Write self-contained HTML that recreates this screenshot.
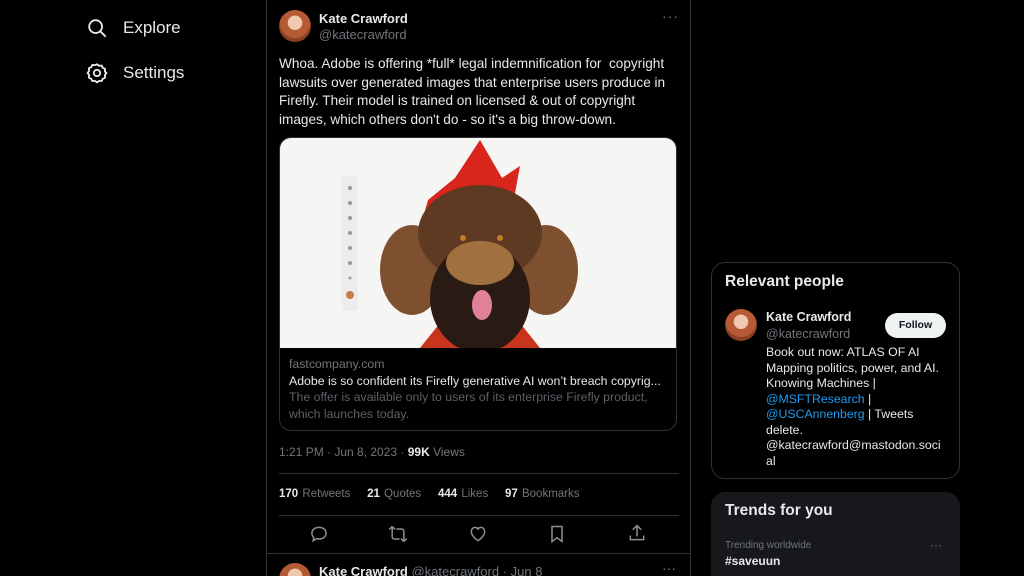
<!DOCTYPE html>
<html><head><meta charset="utf-8"><style>
*{margin:0;padding:0;box-sizing:border-box}
html,body{width:1024px;height:576px;overflow:hidden}
body{background:#000;position:relative;font-family:"Liberation Sans",sans-serif;color:#e7e9ea}
.abs{position:absolute}
.nav{font-size:17px;color:#e7e9ea}
.col{left:266px;top:0;width:425px;height:576px;border-left:1px solid #2f3336;border-right:1px solid #2f3336}
.av{border-radius:50%;background:radial-gradient(circle at 50% 40%,#f0c8b0 0 28%,#b55a35 30% 60%,#8a3e22 62%)}
.muted{color:#71767b}
b{font-weight:700}
.line{height:1px;background:#2f3336}
</style></head><body>
<svg class="abs" style="left:86px;top:17px" width="22" height="22" viewBox="0 0 24 24" fill="none" stroke="#e7e9ea" stroke-width="2"><circle cx="10.5" cy="10.5" r="7"/><path d="M15.5 15.5l6 6"/></svg>
<div class="abs nav" style="left:123px;top:18px">Explore</div>
<svg class="abs" style="left:86px;top:62px" width="22" height="22" viewBox="0 0 24 24" fill="none" stroke="#e7e9ea" stroke-width="2"><path d="M12 2.5l2.3 1.6 2.8-.2 1.2 2.5 2.5 1.2-.2 2.8L22.2 12l-1.6 2.3.2 2.8-2.5 1.2-1.2 2.5-2.8-.2L12 22.2l-2.3-1.6-2.8.2-1.2-2.5-2.5-1.2.2-2.8L1.8 12l1.6-2.3-.2-2.8 2.5-1.2 1.2-2.5 2.8.2z"/><circle cx="12" cy="12" r="3.5"/></svg>
<div class="abs nav" style="left:123px;top:63px">Settings</div>

<div class="abs col"></div>
<div class="abs av" style="left:279px;top:10px;width:32px;height:32px"></div>
<div class="abs" style="left:319px;top:11px;font-size:13px;font-weight:700">Kate Crawford</div>
<div class="abs muted" style="left:319px;top:27px;font-size:13px">@katecrawford</div>
<div class="abs muted" style="left:662px;top:8px;font-size:14px;letter-spacing:1px">···</div>
<div class="abs" style="left:279px;top:55px;width:405px;font-size:13.6px;line-height:18.5px">Whoa. Adobe is offering *full* legal indemnification for&nbsp; copyright lawsuits over generated images that enterprise users produce in Firefly. Their model is trained on licensed &amp; out of copyright images, which others don't do - so it's a big throw-down.</div>

<div class="abs" style="left:279px;top:137px;width:398px;height:294px;border:1px solid #2f3336;border-radius:12px;overflow:hidden">
<svg width="398" height="210" viewBox="0 0 398 210" style="display:block">
<rect width="398" height="210" fill="#f5f5f4"/>
<rect x="62" y="38" width="16" height="135" rx="2" fill="#ececec"/>
<g fill="#999"><circle cx="70" cy="50" r="2"/><circle cx="70" cy="65" r="2"/><circle cx="70" cy="80" r="2"/><circle cx="70" cy="95" r="2"/><circle cx="70" cy="110" r="2"/><circle cx="70" cy="125" r="2"/><circle cx="70" cy="140" r="1.5"/></g>
<circle cx="70" cy="157" r="4" fill="#c87a4a"/>
<path d="M143 80 L148 62 L175 40 L200 2 L222 40 L240 28 L235 55 L258 80 L250 90 L150 90 Z" fill="#d8261c"/>
<ellipse cx="132" cy="132" rx="32" ry="45" fill="#7e5030"/>
<ellipse cx="266" cy="132" rx="32" ry="45" fill="#7e5030"/>
<ellipse cx="200" cy="95" rx="62" ry="48" fill="#5e3a22"/>
<path d="M140 210 L160 185 L200 200 L240 185 L260 210 Z" fill="#c8341c"/>
<ellipse cx="200" cy="160" rx="50" ry="55" fill="#2a1a14"/>
<ellipse cx="200" cy="125" rx="34" ry="22" fill="#a0703f"/>
<ellipse cx="202" cy="167" rx="10" ry="15" fill="#e0809a"/>
<circle cx="183" cy="100" r="3" fill="#c08020"/><circle cx="220" cy="100" r="3" fill="#c08020"/>
</svg>
<div style="padding:8px 10px 0 9px;font-size:12.3px;line-height:16.5px">
<div class="muted">fastcompany.com</div>
<div style="white-space:nowrap">Adobe is so confident its Firefly generative AI won’t breach copyrig...</div>
<div style="color:#5b6066">The offer is available only to users of its enterprise Firefly product, which launches today.</div>
</div></div>

<div class="abs muted" style="left:279px;top:445px;font-size:12px">1:21 PM · Jun 8, 2023 · <b style="color:#e7e9ea">99K</b> Views</div>
<div class="abs line" style="left:279px;top:473px;width:400px"></div>
<div class="abs muted" style="left:279px;top:488px;font-size:11.5px;word-spacing:1px"><b style="color:#e7e9ea">170</b> Retweets &nbsp;&nbsp; <b style="color:#e7e9ea">21</b> Quotes &nbsp;&nbsp; <b style="color:#e7e9ea">444</b> Likes &nbsp;&nbsp; <b style="color:#e7e9ea">97</b> Bookmarks</div>
<div class="abs line" style="left:279px;top:515px;width:400px"></div>
<svg class="abs" style="left:309px;top:524px" width="20" height="20" viewBox="0 0 24 24" fill="none" stroke="#8b9096" stroke-width="1.8"><path d="M12 4c5 0 8.5 3 8.5 7s-3.5 7-8 7c-1 0-2 0-3-.5L5 20l.8-3.5C4.3 15 3.5 13 3.5 11c0-4 3.5-7 8.5-7z"/></svg>
<svg class="abs" style="left:388px;top:524px" width="20" height="20" viewBox="0 0 24 24" fill="none" stroke="#8b9096" stroke-width="1.8"><path d="M5 3L1.5 6.5M5 3l3.5 3.5M5 3v12c0 2 1 3 3 3h6M19 21l3.5-3.5M19 21l-3.5-3.5M19 21V9c0-2-1-3-3-3h-6"/></svg>
<svg class="abs" style="left:468px;top:524px" width="20" height="20" viewBox="0 0 24 24" fill="none" stroke="#8b9096" stroke-width="1.8"><path d="M12 20s-8-5-8-11c0-3 2-5 4.5-5 1.8 0 3 1 3.5 2 .5-1 1.7-2 3.5-2C18 4 20 6 20 9c0 6-8 11-8 11z"/></svg>
<svg class="abs" style="left:547px;top:524px" width="20" height="20" viewBox="0 0 24 24" fill="none" stroke="#8b9096" stroke-width="1.8"><path d="M6 3h12v18l-6-4.5L6 21z"/></svg>
<svg class="abs" style="left:627px;top:523px" width="20" height="20" viewBox="0 0 24 24" fill="none" stroke="#8b9096" stroke-width="1.8"><path d="M12 3v13M7 8l5-5 5 5M4 15v5h16v-5"/></svg>
<div class="abs line" style="left:266px;top:553px;width:425px"></div>
<div class="abs av" style="left:279px;top:563px;width:32px;height:32px"></div>
<div class="abs" style="left:319px;top:564px;font-size:13px"><b>Kate Crawford</b> <span class="muted">@katecrawford · Jun 8</span></div>
<div class="abs muted" style="left:662px;top:560px;font-size:14px">···</div>

<div class="abs" style="left:718px;top:-10px;width:238px;height:10px;border:1px solid #2f3336;border-radius:0 0 10px 10px"></div>
<div class="abs" style="left:711px;top:262px;width:249px;height:217px;border:1px solid #2f3336;border-radius:14px"></div>
<div class="abs" style="left:725px;top:273px;font-size:15.5px;font-weight:700">Relevant people</div>
<div class="abs av" style="left:725px;top:309px;width:32px;height:32px"></div>
<div class="abs" style="left:766px;top:310px;font-size:12.5px;font-weight:700">Kate Crawford</div>
<div class="abs muted" style="left:766px;top:327px;font-size:12.5px">@katecrawford</div>
<div class="abs" style="left:885px;top:313px;width:61px;height:25px;border-radius:13px;background:#eff3f4;color:#0f1419;font-size:10.5px;font-weight:700;text-align:center;line-height:25px">Follow</div>
<div class="abs" style="left:766px;top:345px;width:186px;font-size:12.3px;line-height:15.5px">Book out now: ATLAS OF AI Mapping politics, power, and AI. Knowing Machines | <span style="color:#1d9bf0">@MSFTResearch</span> | <span style="color:#1d9bf0">@USCAnnenberg</span> | Tweets delete. @katecrawford@mastodon.soci al</div>

<div class="abs" style="left:711px;top:492px;width:249px;height:100px;background:#16181c;border-radius:14px"></div>
<div class="abs" style="left:725px;top:502px;font-size:15.5px;font-weight:700">Trends for you</div>
<div class="abs muted" style="left:725px;top:540px;font-size:10px">Trending worldwide</div>
<div class="abs muted" style="left:930px;top:538px;font-size:12px">···</div>
<div class="abs" style="left:725px;top:554px;font-size:12px;font-weight:700">#saveuun</div>
</body></html>
